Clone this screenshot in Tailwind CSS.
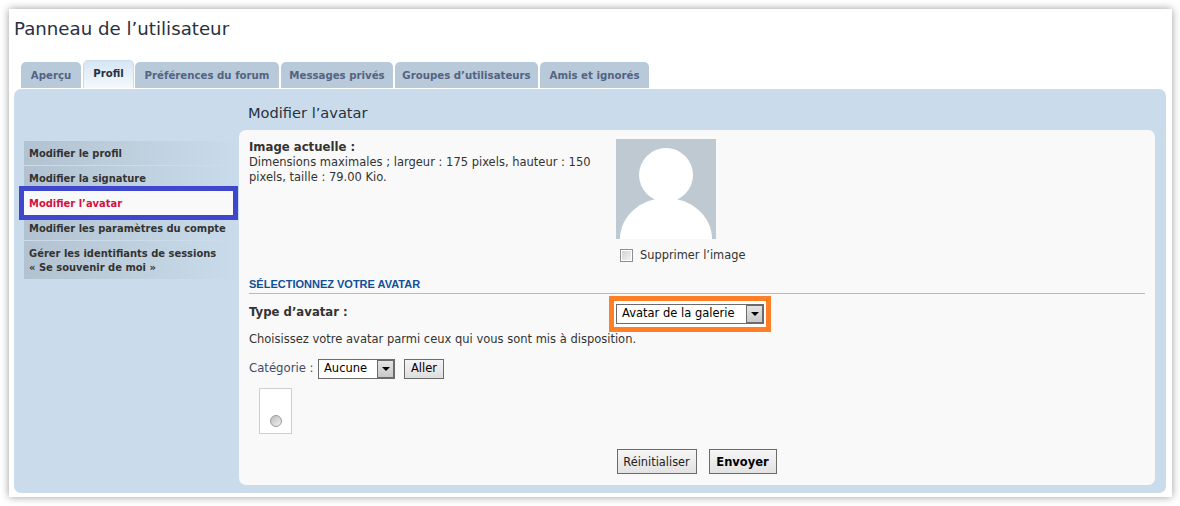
<!DOCTYPE html>
<html lang="fr"><head><meta charset="utf-8">
<script src="https://cdn.jsdelivr.net/npm/@tailwindcss/browser@4"></script>
</head>
<body class="bg-white w-[1180px] h-[506px] overflow-hidden font-['DejaVu_Sans',sans-serif] text-[11.5px] text-[#333]">
<div class="ml-[9px] mt-[9px] w-[1163px] h-[488px] bg-white shadow-[0_0_8px_rgba(0,0,0,0.4)] pl-[5px] pr-[6px] flex flex-col">
  <h2 class="h-[52px] pt-[8px] text-[18.2px] leading-[24px] text-[#28313f] font-normal">Panneau de l’utilisateur</h2>
  <div class="h-[27px] flex items-end pl-[7px] gap-[2px] text-[10.2px] font-bold text-[#536482]">
    <div class="w-[60px] h-[26px] pt-px rounded-t-[5px] bg-[#b8c9d9] flex items-center justify-center">Aperçu</div>
    <div class="w-[51px] h-[28px] rounded-t-[5px] bg-linear-to-b from-[#d6e6f4] to-[#f5f9fc] border border-b-0 border-[#cadceb] flex items-center justify-center text-[#28313f] mr-[-1px] pb-[1px]">Profil</div>
    <div class="w-[144px] h-[26px] pt-px rounded-t-[5px] bg-[#b8c9d9] flex items-center justify-center">Préférences du forum</div>
    <div class="w-[112px] h-[26px] pt-px rounded-t-[5px] bg-[#b8c9d9] flex items-center justify-center">Messages privés</div>
    <div class="w-[143px] h-[26px] pt-px rounded-t-[5px] bg-[#b8c9d9] flex items-center justify-center">Groupes d’utilisateurs</div>
    <div class="w-[109px] h-[26px] pt-px rounded-t-[5px] bg-[#b8c9d9] flex items-center justify-center">Amis et ignorés</div>
  </div>
  <div class="mt-px h-[404px] rounded-[7px] bg-[#cadceb] flex pl-[10px] pr-[11px] pt-[12px] pb-[8px]">
    <div class="w-[215px] pt-[40px] text-[9.95px] font-bold text-[#333] leading-[14px] flex flex-col gap-px">
      <div class="h-[24px] pt-[2px] flex items-center pl-[5px] bg-linear-to-r from-[#b2c2d1] to-[#cadceb]">Modifier le profil</div>
      <div class="h-[24px] pt-[2px] flex items-center pl-[5px] bg-linear-to-r from-[#b2c2d1] to-[#cadceb]">Modifier la signature</div>
      <div class="relative h-[24px] pt-[2px] flex items-center pl-[5px] bg-[#f9f9f9] text-[#d31141] w-[209px] outline-[5px] outline-[#3f48cc] z-10">Modifier l’avatar</div>
      <div class="h-[24px] pt-[2px] flex items-center pl-[5px] bg-linear-to-r from-[#b2c2d1] to-[#cadceb]">Modifier les paramètres du compte</div>
      <div class="h-[38px] pt-[2px] flex flex-col justify-center pl-[5px] bg-linear-to-r from-[#b2c2d1] to-[#cadceb]"><span>Gérer les identifiants de sessions</span><span>« Se souvenir de moi »</span></div>
    </div>
    <div class="flex-1 flex flex-col">
      <h2 class="h-[29px] pt-[2px] pl-[9px] text-[14.6px] leading-[20px] text-[#28313f] font-normal">Modifier l’avatar</h2>
      <div class="h-[355px] rounded-[7px] bg-[#f9f9f9] pl-[10px] pr-[10px] relative flex flex-col">
        <div class="flex h-[145px]">
          <div class="w-[367px] pt-[10px] leading-[15px] text-[#333]">
            <div class="font-bold text-[11.7px] leading-[15px]">Image actuelle :</div>
            <div class="w-[350px]">Dimensions maximales ; largeur : 175 pixels, hauteur : 150 pixels, taille : 79.00 Kio.</div>
          </div>
          <div class="pt-[9px]">
            <svg class="w-[100px] h-[100px] block" viewBox="0 0 100 100"><rect width="100" height="100" fill="#bec9d2"/><circle cx="50" cy="36" r="27" fill="#fff"/><ellipse cx="50" cy="100" rx="46" ry="41" fill="#fff"/></svg>
            <div class="flex items-center mt-[8px] ml-[4px] gap-[7px]">
              <span class="w-[13px] h-[13px] border border-[#8e8e8e] bg-linear-to-br from-[#d0d0d0] to-[#f6f6f6] outline outline-white -outline-offset-2"></span>
              <span class="text-[11.4px] text-[#333]">Supprimer l’image</span>
            </div>
          </div>
        </div>
        <div class="h-[18px] mt-px border-b border-[#b4bcc4] font-['Liberation_Sans',sans-serif] font-bold text-[#115098] leading-[14px] pt-[1px] text-[11px]">SÉLECTIONNEZ VOTRE AVATAR</div>
        <div class="flex h-[37px] items-center mt-px">
          <div class="w-[360px] font-bold text-[11.7px] -mt-[1px]">Type d’avatar :</div>
          <div class="w-[162px] h-[36px] border-[5px] border-[#ff7f27] bg-white flex items-center justify-center mt-px">
            <div class="w-[148px] h-[20px] border-[1.5px] border-[#6b6b6b] bg-white flex items-center justify-between text-[11.5px] text-black pl-[5px]">Avatar de la galerie
              <span class="w-[17px] h-full bg-linear-to-b from-[#e4e4e4] to-[#c8c8c8] border-[1.5px] border-[#6b6b6b] flex items-center justify-center"><span class="w-0 h-0 border-x-[4px] border-x-transparent border-t-[4px] border-t-black"></span></span>
            </div>
          </div>
        </div>
        <div class="h-[19px] leading-[15px] text-[#333]">Choisissez votre avatar parmi ceux qui vous sont mis à disposition.</div>
        <div class="flex items-center h-[20px] mt-[8px]">
          <span class="text-[#3f4a68] text-[11.7px] w-[69px]">Catégorie :</span>
          <div class="w-[77px] h-[20px] border border-[#6b6b6b] bg-white flex items-center justify-between text-[11.5px] text-black pl-[5px]">Aucune
            <span class="w-[17px] h-full bg-linear-to-b from-[#e4e4e4] to-[#c8c8c8] border-[1.5px] border-[#6b6b6b] flex items-center justify-center"><span class="w-0 h-0 border-x-[4px] border-x-transparent border-t-[4px] border-t-black"></span></span>
          </div>
          <div class="ml-[9px] w-[40px] h-[20px] border border-[#6b6b6b] bg-linear-to-b from-[#f4f4f4] to-[#dedede] flex items-center justify-center text-[11.5px] text-black">Aller</div>
        </div>
        <div class="mt-[9px] ml-[10px] w-[33px] h-[46px] border border-[#cfcfcf] bg-white flex items-end justify-center pb-[6px]">
          <span class="w-[12px] h-[12px] rounded-full border border-[#9a9a9a] bg-linear-to-br from-[#bdbdbd] to-[#f0f0f0]"></span>
        </div>
        <div class="flex justify-center gap-[12px] mt-[15px] -ml-[1px]">
          <div class="w-[80px] h-[25px] pt-[2px] border border-[#6b6b6b] bg-linear-to-b from-[#f6f6f6] to-[#e2e2e2] flex items-center justify-center text-[11.4px] text-[#222]">Réinitialiser</div>
          <div class="w-[68px] h-[25px] pt-[2px] border border-[#6b6b6b] bg-linear-to-b from-[#f6f6f6] to-[#e2e2e2] flex items-center justify-center text-[11.5px] font-bold text-black">Envoyer</div>
        </div>
      </div>
    </div>
  </div>
</div>
</body></html>
